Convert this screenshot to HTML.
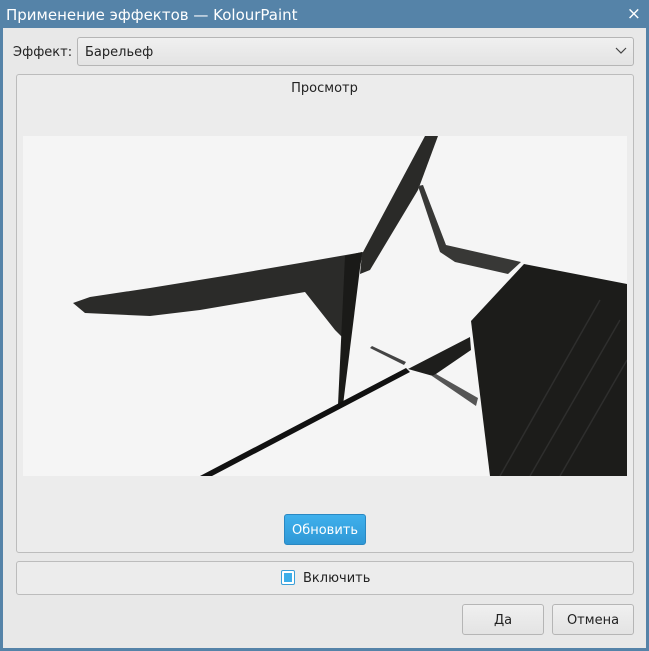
<!DOCTYPE html>
<html><head><meta charset="utf-8"><style>
*{margin:0;padding:0;box-sizing:border-box}
body{width:649px;height:651px;background:#5583a8;font-family:"Liberation Sans","DejaVu Sans",sans-serif;font-size:13px;color:#222;position:relative;overflow:hidden}
.t{position:absolute;left:6px;top:6px;color:#fff;font-size:15px;font-family:"DejaVu Sans","Liberation Sans",sans-serif}
.x{position:absolute;right:8px;top:4px;color:#fff;font-size:17px;font-family:"DejaVu Sans",sans-serif}
.win{position:absolute;left:3px;top:28px;width:643px;height:620px;background:#e8e8e8}
.a{position:absolute}
.btn{position:absolute;border:1px solid #b5b5b5;border-radius:3px;background:linear-gradient(#f0f0f0,#e3e3e3);text-align:center;font-family:"DejaVu Sans",sans-serif;font-size:13px}
.grp{position:absolute;border:1px solid #bcbcbc;border-radius:3px;background:#ececec}
</style></head><body>
<div class="t">Применение эффектов — KolourPaint</div>
<div class="x">×</div>
<div class="win"></div>
<div class="a" style="left:13px;top:45px;font-family:'DejaVu Sans',sans-serif">Эффект:</div>
<div class="btn" style="left:77px;top:37px;width:557px;height:29px;text-align:left;padding:7px 0 0 7px">Барельеф
<svg style="position:absolute;right:6px;top:9px" width="12" height="8"><path d="M1 1 L6 6 L11 1" stroke="#444" fill="none" stroke-width="1.2"/></svg></div>
<div class="grp" style="left:16px;top:74px;width:618px;height:479px"></div>
<div class="a" style="left:0;width:649px;text-align:center;top:81px;font-family:'DejaVu Sans',sans-serif">Просмотр</div>
<svg class="a" style="left:23px;top:136px" width="604" height="340" viewBox="23 136 604 340">
<rect x="23" y="136" width="604" height="340" fill="#f5f5f5"/>
<g fill="#222">
<polygon points="73,303 90,297 150,288 230,275 300,263 363,252 345,340 335,330 305,292 200,310 150,316 85,313" fill="#2b2b29"/>
<polygon points="345,256 362,252 343,405 338,405" fill="#1a1a18"/>
<polygon points="425,136 438,136 418,190 370,270 360,274 362,254" fill="#2a2a28"/>
<polygon points="418,186 423,185 446,245 521,262 508,274 455,262 440,252" fill="#383836"/>
<polygon points="524,264 627,284 627,476 490,476 471,321" fill="#1c1c1a"/>
<polygon points="200,476 212,476 410,372 406,368" fill="#111"/>
<polygon points="408,369 470,337 471,350 433,376" fill="#1e1e1c"/>
<polygon points="432,376 436,374 478,398 476,406" fill="#555"/>
<polygon points="370,348 372,346 406,362 404,365" fill="#444"/>
</g>
<g stroke="#3a3a3a" stroke-width="1.5" opacity="0.6">
<line x1="600" y1="300" x2="500" y2="476"/><line x1="620" y1="320" x2="530" y2="476"/><line x1="627" y1="360" x2="560" y2="476"/>
</g>
</svg>
<div class="btn" style="left:284px;top:514px;width:82px;height:31px;padding-top:8px;background:linear-gradient(#3fb0ec,#2f98d6);border-color:#2a88c2;color:#fff">Обновить</div>
<div class="grp" style="left:16px;top:561px;width:618px;height:34px"></div>
<div class="a" style="left:281px;top:570px;width:14px;height:15px;border:1px solid #3a9fd8;border-radius:2px;background:#fff"><div style="margin:2px;width:8px;height:9px;background:#3daee9"></div></div>
<div class="a" style="left:303px;top:571px;font-family:'DejaVu Sans',sans-serif">Включить</div>
<div class="btn" style="left:462px;top:604px;width:82px;height:31px;padding-top:8px">Да</div>
<div class="btn" style="left:552px;top:604px;width:82px;height:31px;padding-top:8px">Отмена</div>
</body></html>
